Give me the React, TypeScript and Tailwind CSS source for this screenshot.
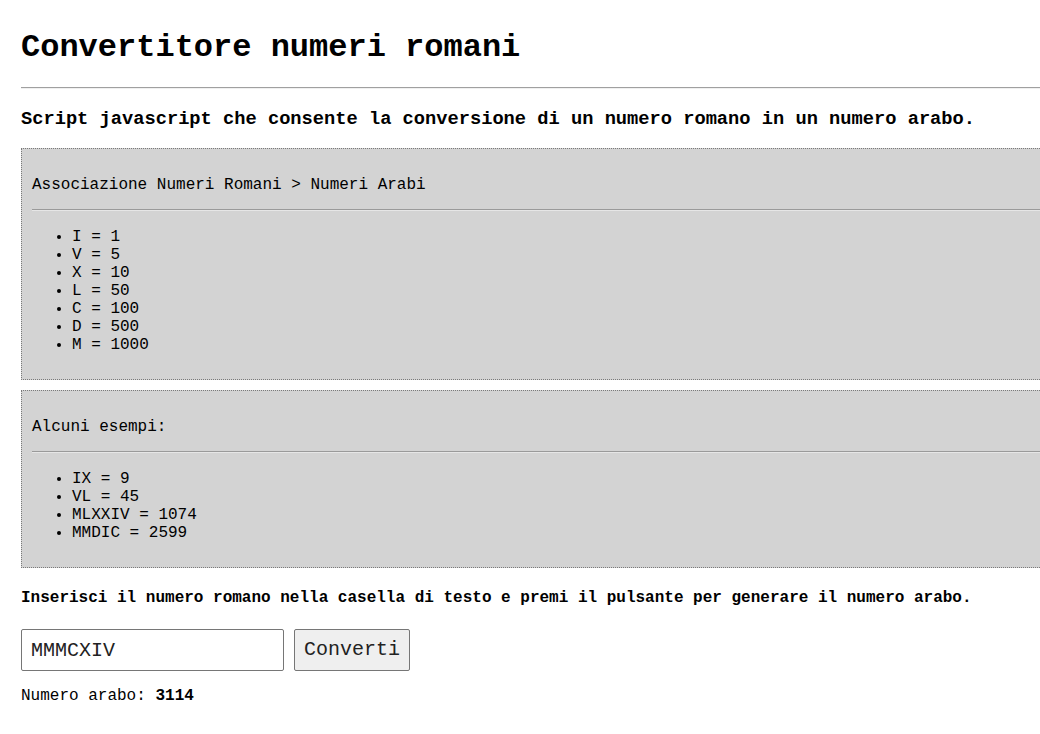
import { useState } from "react";

const valori: [string, number][] = [
  ["I", 1],
  ["V", 5],
  ["X", 10],
  ["L", 50],
  ["C", 100],
  ["D", 500],
  ["M", 1000],
];

const esempi = ["IX = 9", "VL = 45", "MLXXIV = 1074", "MMDIC = 2599"];

function romanoInArabo(testo: string) {
  const mappa: Record<string, number> = Object.fromEntries(valori);
  const lettere = testo.toUpperCase().split("");
  let totale = 0;
  lettere.forEach((l, i) => {
    const v = mappa[l] ?? 0;
    const prossimo = mappa[lettere[i + 1]] ?? 0;
    totale += v < prossimo ? -v : v;
  });
  return totale;
}

function Riquadro({ titolo, voci }: { titolo: string; voci: string[] }) {
  return (
    <div className="border border-dotted border-[#7a7a7a] bg-[#d3d3d3] px-[10px] pt-[11px] pb-[9px]">
      <p className="mt-[16px] text-[16px] leading-[18px]">{titolo}</p>
      <hr className="mt-[15px] border-t border-b border-t-[#9a9a9a] border-b-[#e6e6e6]" />
      <ul className="mt-[17px] mb-[16px] list-disc pl-[40px] text-[16px] leading-[18px]">
        {voci.map((voce) => (
          <li key={voce}>{voce}</li>
        ))}
      </ul>
    </div>
  );
}

export default function App() {
  const [valore, setValore] = useState("MMMCXIV");
  const [risultato, setRisultato] = useState(3114);

  return (
    <div className="w-[1040px] overflow-hidden bg-white text-black font-['Liberation_Mono','Courier_New',monospace]">
      <div className="w-[1100px] pl-[21px] pt-[30px] pb-[30px]">
        <h1 className="text-[32px] font-bold leading-[36px]">Convertitore numeri romani</h1>
        <hr className="mt-[21px] border-t border-b border-t-[#a0a0a0] border-b-[#f0f0f0]" />
        <h3 className="mt-[20px] mb-[18px] text-[18.72px] font-bold leading-[21px]">
          Script javascript che consente la conversione di un numero romano in un numero arabo.
        </h3>

        <Riquadro
          titolo="Associazione Numeri Romani > Numeri Arabi"
          voci={valori.map(([r, n]) => `${r} = ${n}`)}
        />
        <div className="mt-[10px]">
          <Riquadro titolo="Alcuni esempi:" voci={esempi} />
        </div>

        <h4 className="mt-[21px] text-[16px] font-bold leading-[18px]">
          Inserisci il numero romano nella casella di testo e premi il pulsante per generare il numero arabo.
        </h4>

        <div className="mt-[22px] flex items-center gap-[10px]">
          <input
            value={valore}
            onChange={(e) => setValore(e.target.value)}
            className="h-[42px] w-[263px] rounded-[2px] border border-[#767676] px-[9px] text-[20px] text-[#222] outline-none font-['Liberation_Mono','Courier_New',monospace]"
          />
          <button
            onClick={() => setRisultato(romanoInArabo(valore))}
            className="h-[42px] w-[116px] rounded-[2px] border border-[#767676] bg-[#efefef] text-[20px] text-[#222] font-['Liberation_Mono','Courier_New',monospace]"
          >
            Converti
          </button>
        </div>

        <p className="mt-[16px] text-[16px] leading-[18px]">
          Numero arabo: <b>{risultato}</b>
        </p>
      </div>
    </div>
  );
}
